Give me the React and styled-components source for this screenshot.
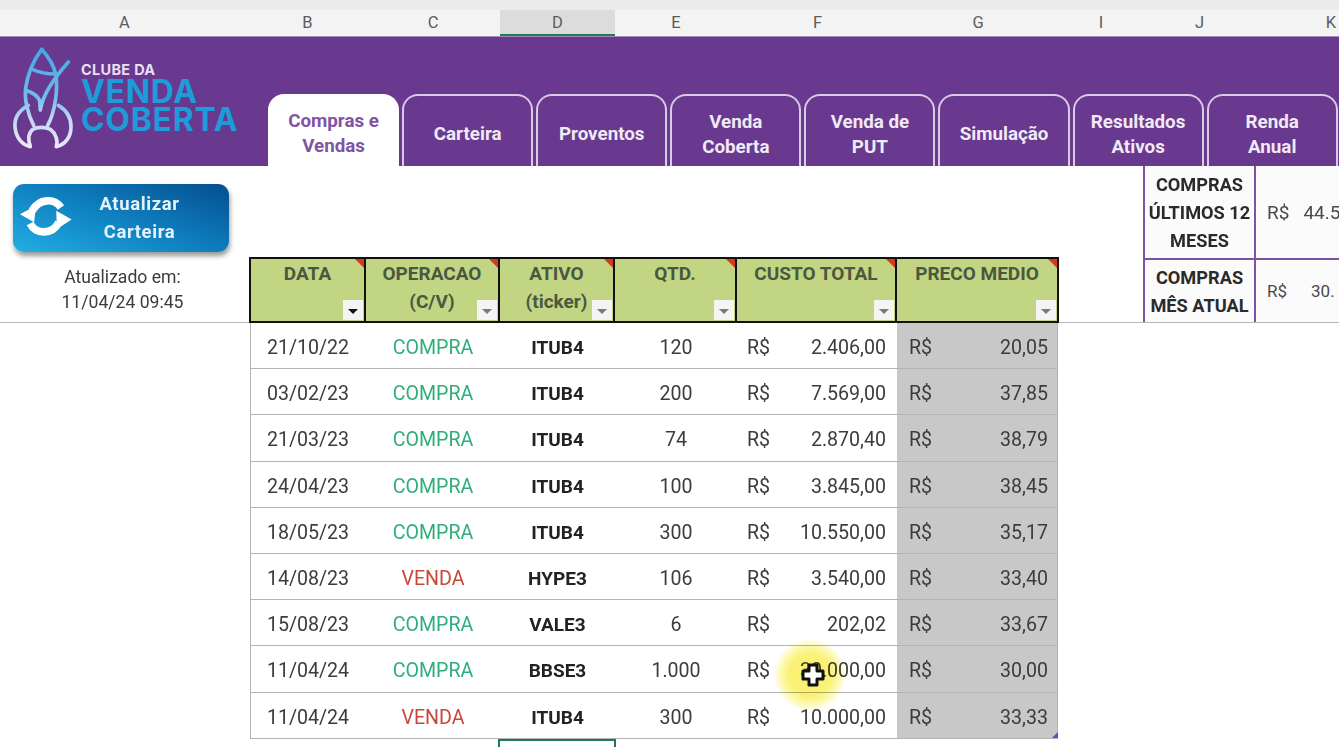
import React from 'react';
import styled, {createGlobalStyle} from "styled-components";

const COLS = '116px 134px 115px 122px 160px 161px';
const HEAD_COLS = '115px 134px 115px 122px 160px 160px';

const letters = [
    {name: 'A', w: 249}, {name: 'B', w: 117}, {name: 'C', w: 134}, {name: 'D', w: 115, on: true},
    {name: 'E', w: 122}, {name: 'F', w: 161}, {name: 'G', w: 160}, {name: 'I', w: 86},
    {name: 'J', w: 111}, {name: 'K', w: 152},
];

const tabs = [
    ['Compras e', 'Vendas'], ['Carteira'], ['Proventos'], ['Venda', 'Coberta'], ['Venda de', 'PUT'],
    ['Simulação'], ['Resultados', 'Ativos'], ['Renda', 'Anual'],
];

const heads = [
    {label: ['DATA'], active: true},
    {label: ['OPERACAO', '(C/V)']},
    {label: ['ATIVO', '(ticker)']},
    {label: ['QTD.']},
    {label: ['CUSTO TOTAL']},
    {label: ['PRECO MEDIO']},
];

const rows = [
    ['21/10/22', 'COMPRA', 'ITUB4', '120', '2.406,00', '20,05'],
    ['03/02/23', 'COMPRA', 'ITUB4', '200', '7.569,00', '37,85'],
    ['21/03/23', 'COMPRA', 'ITUB4', '74', '2.870,40', '38,79'],
    ['24/04/23', 'COMPRA', 'ITUB4', '100', '3.845,00', '38,45'],
    ['18/05/23', 'COMPRA', 'ITUB4', '300', '10.550,00', '35,17'],
    ['14/08/23', 'VENDA', 'HYPE3', '106', '3.540,00', '33,40'],
    ['15/08/23', 'COMPRA', 'VALE3', '6', '202,02', '33,67'],
    ['11/04/24', 'COMPRA', 'BBSE3', '1.000', '30.000,00', '30,00'],
    ['11/04/24', 'VENDA', 'ITUB4', '300', '10.000,00', '33,33'],
];

const RocketLogo = () => (
    <svg width="80" height="112" viewBox="0 0 240 336" fill="none">
        <defs>
            <linearGradient id="rocket" gradientUnits="userSpaceOnUse" x1="0" y1="20" x2="0" y2="315">
                <stop offset="0" stopColor="#45a5e2"/>
                <stop offset="0.5" stopColor="#74bdee"/>
                <stop offset="0.72" stopColor="#c4d6f4"/>
                <stop offset="1" stopColor="#eee8f8"/>
            </linearGradient>
        </defs>
        <g stroke="url(#rocket)" strokeWidth="11" strokeLinecap="round" strokeLinejoin="round">
            <path d="M110 22 C88 52 68 92 62 138 C58 172 68 216 86 250"/>
            <path d="M110 22 C130 44 146 70 152 96 C160 140 150 210 128 250"/>
            <path d="M82 82 C104 92 130 96 152 96"/>
            <path d="M66 146 C84 152 98 162 104 176 L106 204 C110 176 128 130 190 60"/>
            <path d="M70 190 C44 204 28 226 30 254 C32 286 50 308 76 314 C70 296 68 274 84 262 C96 254 122 254 136 262 C152 274 160 296 154 314 C180 308 198 286 198 254 C198 226 184 204 160 190"/>
        </g>
    </svg>
);

const SyncIcon = () => (
    <svg width="52" height="42" viewBox="30 45 155 125" fill="#fff">
        <path d="M152 82 C132 54 88 54 66 92" fill="none" stroke="#fff" strokeWidth="23"/>
        <path d="M30 102 L78 76 L72 126 Z"/>
        <path d="M60 130 C78 164 126 164 146 126" fill="none" stroke="#fff" strokeWidth="23"/>
        <path d="M184 118 L138 92 L140 146 Z"/>
    </svg>
);

const CrossCursor = () => (
    <svg width="24" height="24" viewBox="0 0 24 24">
        <path d="M8 2 H16 V8 H22 V16 H16 V22 H8 V16 H2 V8 H8 Z" fill="#fff" stroke="#111" strokeWidth="3" strokeLinejoin="round"/>
    </svg>
);

const App = () => {
    return (
        <Page>
            <GlobalStyle/>
            <ColumnBar>
                {letters.map(l => (
                    <ColumnLetter key={l.name} $w={l.w} $on={l.on}>{l.name}</ColumnLetter>
                ))}
            </ColumnBar>
            <Banner>
                <Logo>
                    <RocketLogo/>
                    <LogoText>
                        <small>CLUBE DA</small>
                        <strong>VENDA</strong>
                        <strong>COBERTA</strong>
                    </LogoText>
                </Logo>
                <Tabs>
                    {tabs.map((t, i) => (
                        <Tab key={t[0]} $active={i === 0}>
                            {t.map(line => <span key={line}>{line}</span>)}
                        </Tab>
                    ))}
                </Tabs>
            </Banner>
            <TopSection>
                <SidePanel>
                    <UpdateButton>
                        <SyncIcon/>
                        <ButtonLabel>Atualizar<br/>Carteira</ButtonLabel>
                    </UpdateButton>
                    <UpdatedAt>Atualizado em:<br/>11/04/24 09:45</UpdatedAt>
                </SidePanel>
                <TableHead>
                    {heads.map(h => (
                        <HeadCell key={h.label[0]}>
                            {h.label.map(line => <span key={line}>{line}</span>)}
                            <FilterButton $active={h.active}/>
                        </HeadCell>
                    ))}
                </TableHead>
                <span/>
                <Summary>
                    <SummaryRow $h={92}>
                        <SummaryLabel>COMPRAS<br/>ÚLTIMOS 12<br/>MESES</SummaryLabel>
                        <SummaryValue $gap={14}><span>R$</span><span>44.5</span></SummaryValue>
                    </SummaryRow>
                    <SummaryRow $h={64}>
                        <SummaryLabel>COMPRAS<br/>MÊS ATUAL</SummaryLabel>
                        <SummaryValue $gap={24} $small><span>R$</span><span>30.</span></SummaryValue>
                    </SummaryRow>
                </Summary>
            </TopSection>
            <TableBody>
                {rows.map((r, i) => (
                    <Row key={i}>
                        <DateCell>{r[0]}</DateCell>
                        <OperationCell $sell={r[1] === 'VENDA'}>{r[1]}</OperationCell>
                        <TickerCell>{r[2]}</TickerCell>
                        <Cell>{r[3]}</Cell>
                        <MoneyCell><span>R$</span><span>{r[4]}</span></MoneyCell>
                        <AverageCell><span>R$</span><span>{r[5]}</span></AverageCell>
                    </Row>
                ))}
                <SelectedCell/>
                <ResizeHandle/>
                <Highlight>
                    <CrossCursor/>
                </Highlight>
            </TableBody>
        </Page>
    );
};

export default App;

const GlobalStyle = createGlobalStyle`
    html, body {
        margin: 0;
        padding: 0;
        background: #fff;
        overflow: hidden;
    }
    * {
        box-sizing: border-box;
    }
`

const Page = styled.div`
    width: 1339px;
    height: 747px;
    overflow: hidden;
    font-family: Roboto, "Liberation Sans", sans-serif;
    color: #3c3c3c;
    filter: blur(0.4px);
`

const ColumnBar = styled.div`
    display: flex;
    height: 37px;
    padding-top: 10px;
    background: linear-gradient(#ebebeb 0, #ebebeb 10px, #f3f3f3 10px);
    border-bottom: 1px solid #a888c4;
    overflow: hidden;
`

const ColumnLetter = styled.div`
    flex: 0 0 ${p => p.$w}px;
    display: flex;
    align-items: center;
    justify-content: center;
    font-size: 16.5px;
    color: #5c5c5c;
    background: ${p => p.$on ? '#dcdcdc' : 'transparent'};
    border-bottom: 2px solid ${p => p.$on ? '#1f7a55' : 'transparent'};
`

const Banner = styled.div`
    display: flex;
    align-items: flex-end;
    height: 129px;
    background: #68398f;
    overflow: hidden;
`

const Logo = styled.div`
    flex: 0 0 268px;
    align-self: flex-start;
    display: flex;
    align-items: flex-start;
    padding: 5px 0 0 5px;
    svg {
        margin-right: -4px;
    }
`

const LogoText = styled.div`
    display: flex;
    flex-direction: column;
    padding-top: 19px;
    font-family: Inter, sans-serif;
    small {
        font-size: 14.5px;
        font-weight: 700;
        line-height: 17px;
        letter-spacing: 0.3px;
        color: #e9dff1;
    }
    strong {
        font-size: 32px;
        font-weight: 700;
        line-height: 28px;
        letter-spacing: 0.7px;
        color: #1e9bd9;
    }
`

const Tabs = styled.div`
    display: flex;
    gap: 3px;
`

const Tab = styled.div`
    flex: 0 0 131.1px;
    height: 72px;
    display: flex;
    flex-direction: column;
    align-items: center;
    justify-content: center;
    padding-top: ${p => p.$active ? 6 : 7}px;
    font-size: 18.8px;
    font-weight: 700;
    line-height: 25px;
    color: ${p => p.$active ? '#7f54a3' : '#f1e9f6'};
    background: ${p => p.$active ? '#fff' : '#68398f'};
    border: 2px solid ${p => p.$active ? '#fff' : '#d9cbe6'};
    border-bottom: none;
    border-radius: 16px 16px 0 0;
`

const TopSection = styled.div`
    display: grid;
    grid-template-columns: 250px 808px 85px 1fr;
    height: 157px;
    border-bottom: 1px solid #b8b8b8;
`

const SidePanel = styled.div`
    display: flex;
    flex-direction: column;
    align-items: center;
    padding: 18px 8px 0 0;
`

const UpdateButton = styled.div`
    width: 216px;
    height: 68px;
    display: flex;
    align-items: center;
    gap: 20px;
    padding: 0 0 4px 7px;
    border-radius: 11px;
    background: linear-gradient(20deg, #22aee3 0%, #0f7fc0 50%, #044f8e 100%);
    box-shadow: 1px 4px 5px rgba(0, 0, 0, 0.4);
`

const ButtonLabel = styled.div`
    flex: 1;
    padding: 4px 42px 0 0;
    text-align: center;
    font-size: 18.5px;
    font-weight: 700;
    line-height: 28px;
    letter-spacing: 0.6px;
    color: #e4f3fb;
    white-space: nowrap;
`

const UpdatedAt = styled.div`
    margin-top: 13px;
    padding-left: 3px;
    text-align: center;
    font-size: 17.6px;
    line-height: 25px;
    color: #3c3c3c;
`

const TableHead = styled.div`
    align-self: end;
    display: grid;
    grid-template-columns: ${HEAD_COLS};
    height: 66px;
    margin: 0 0 -1px -1px;
    width: 810px;
    border: 2px solid #111;
    background: #111;
`

const HeadCell = styled.div`
    position: relative;
    display: flex;
    flex-direction: column;
    align-items: center;
    padding-top: 1px;
    margin-right: 2px;
    font-size: 19px;
    font-weight: 700;
    line-height: 28px;
    color: #4b5840;
    background: #c2d583;
    &:last-child {
        margin-right: 0;
    }
    &::before {
        content: "";
        position: absolute;
        top: 0;
        right: 0;
        border-top: 9px solid #d8391b;
        border-left: 9px solid transparent;
    }
`

const FilterButton = styled.div`
    position: absolute;
    right: 1px;
    bottom: 1px;
    width: 20px;
    height: 20px;
    background: #f4f4f4;
    &::after {
        content: "";
        position: absolute;
        left: 5px;
        top: 9px;
        border-top: 5px solid ${p => p.$active ? '#111' : '#7a7a7a'};
        border-left: 5px solid transparent;
        border-right: 5px solid transparent;
    }
`

const Summary = styled.div`
    display: flex;
    flex-direction: column;
    min-width: 0;
`

const SummaryRow = styled.div`
    display: grid;
    grid-template-columns: 113px 1fr;
    height: ${p => p.$h}px;
    & + & {
        border-top: 2px solid #7b52a6;
    }
`

const SummaryLabel = styled.div`
    display: flex;
    align-items: center;
    justify-content: center;
    padding-top: 1px;
    text-align: center;
    font-size: 18.2px;
    font-weight: 700;
    line-height: 28px;
    color: #2a2a2a;
    background: #fbfbfb;
    border-left: 2px solid #7b52a6;
    border-right: 2px solid #7b52a6;
`

const SummaryValue = styled.div`
    display: flex;
    align-items: center;
    gap: ${p => p.$gap}px;
    padding-left: 11px;
    font-size: ${p => p.$small ? 17 : 19}px;
    color: #4a4a4a;
    background: #fbfbfb;
    white-space: nowrap;
    overflow: hidden;
`

const TableBody = styled.div`
    position: relative;
    width: 808px;
    margin-left: 250px;
`

const Row = styled.div`
    display: grid;
    grid-template-columns: ${COLS};
    height: 46.2px;
    border-bottom: 1px solid #b4b4b4;
`

const Cell = styled.div`
    display: flex;
    align-items: center;
    justify-content: center;
    padding-top: 4px;
    font-size: 19.6px;
    color: #3c3c3c;
`

const DateCell = styled(Cell)`
    box-shadow: inset 1px 0 0 #b4b4b4;
`

const OperationCell = styled(Cell)`
    color: ${p => p.$sell ? '#c9473a' : '#2fae7c'};
`

const TickerCell = styled(Cell)`
    font-weight: 700;
    font-size: 19px;
    color: #222;
`

const MoneyCell = styled(Cell)`
    justify-content: space-between;
    padding: 4px 11px 0 10px;
`

const AverageCell = styled(MoneyCell)`
    padding: 4px 10px 0 12px;
    background: #c9c8c9;
    box-shadow: inset -1px 0 0 #b4b4b4;
`

const SelectedCell = styled.div`
    width: 118px;
    height: 40px;
    margin-left: 248px;
    background: #fff;
    border: 2px solid #1f7a55;
`

const ResizeHandle = styled.div`
    position: absolute;
    right: 0;
    top: 409px;
    border-bottom: 6px solid #4a55c0;
    border-left: 6px solid transparent;
`

const Highlight = styled.div`
    position: absolute;
    left: 524px;
    top: 316px;
    width: 72px;
    height: 72px;
    display: flex;
    align-items: center;
    justify-content: center;
    padding-left: 5px;
    &::before {
        content: "";
        position: absolute;
        inset: 0;
        border-radius: 50%;
        mix-blend-mode: multiply;
        background: radial-gradient(circle, #f8ef6a 0%, #faf278 42%, #fdf9b4 58%, rgba(255, 255, 255, 0) 72%);
    }
    svg {
        position: relative;
    }
`
